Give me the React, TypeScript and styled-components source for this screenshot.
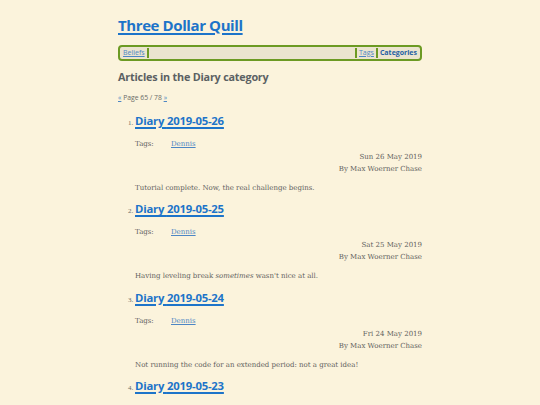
import React from 'react';
import styled, { createGlobalStyle } from 'styled-components';

const GlobalStyle = createGlobalStyle`
  html, body {
    margin: 0;
    padding: 0;
    background: #fbf3dc;
  }
  body {
    font-family: "Noto Sans", sans-serif;
  }
`;

const Page = styled.div`
  width: 304px;
  margin: 0 auto;
  padding-top: 13px;
`;

const Title = styled.a`
  display: block;
  font-family: "Open Sans", "Noto Sans", sans-serif;
  font-weight: 700;
  font-size: 15px;
  line-height: 24px;
  letter-spacing: -0.4px;
  color: #1d74c9;
  text-decoration: underline;
  text-decoration-thickness: 1.5px;
  text-underline-offset: 2px;
`;

const Nav = styled.nav`
  margin-top: 8px;
  height: 12px;
  display: flex;
  align-items: center;
  border: 2px solid #6c9a23;
  border-radius: 4px;
  background: #ebe4cf;
  padding: 0 1px;
  font-family: "Open Sans", "Noto Sans", sans-serif;
  font-size: 7px;
`;

const NavLink = styled.a<{ $current?: boolean }>`
  padding: 0 2px;
  color: ${(p) => (p.$current ? '#1f5fa2' : '#4d86c4')};
  font-weight: ${(p) => (p.$current ? 700 : 400)};
  text-decoration: ${(p) => (p.$current ? 'none' : 'underline')};
  line-height: 10px;
`;

const Sep = styled.span`
  width: 2px;
  height: 10px;
  background: #6c9a23;
`;

const Spacer = styled.span`
  flex: 1;
`;

const Heading = styled.h2`
  margin: 7px 0 0;
  font-family: "Open Sans", "Noto Sans", sans-serif;
  font-weight: 700;
  font-size: 10.8px;
  line-height: 18px;
  letter-spacing: -0.2px;
  color: #5b6163;
`;

const Pager = styled.p`
  margin: 7px 0 0;
  font-family: "Open Sans", "Noto Sans", sans-serif;
  font-size: 6.8px;
  line-height: 10px;
  color: #6a6c68;
  a {
    color: #4d86c4;
    text-decoration: underline;
  }
`;

const List = styled.ol`
  margin: 9px 0 0;
  padding: 0 0 0 17px;
`;

const Item = styled.li`
  margin-bottom: 6.3px;
  font-family: "Liberation Serif", serif;
  font-size: 6.5px;
  color: #6a6c68;
  &::marker {
    font-family: "Liberation Serif", serif;
    font-size: 7px;
  }
`;

const ItemTitle = styled.a`
  font-family: "Open Sans", "Noto Sans", sans-serif;
  font-weight: 700;
  font-size: 11.3px;
  line-height: 18px;
  letter-spacing: -0.2px;
  color: #1d74c9;
  text-decoration: underline;
  text-decoration-thickness: 1.5px;
  text-underline-offset: 2px;
`;

const Meta = styled.div`
  margin-top: 8px;
  font-family: "DejaVu Serif", serif;
  font-size: 7px;
  line-height: 12px;
  color: #5f615d;
`;

const TagRow = styled.div`
  display: flex;
  margin-bottom: 1px;
`;

const TagLabel = styled.span`
  width: 36px;
`;

const TagLink = styled.a`
  color: #4d86c4;
  text-decoration: underline;
`;

const Byline = styled.div`
  text-align: right;
`;

const Summary = styled.p`
  margin: 7px 0 0;
  font-family: "DejaVu Serif", serif;
  font-size: 7px;
  line-height: 12px;
  color: #5f615d;
`;

const articles = [
  { date: '2019-05-26', day: 'Sun 26 May 2019', summary: <>Tutorial complete. Now, the real challenge begins.</> },
  { date: '2019-05-25', day: 'Sat 25 May 2019', summary: <>Having leveling break <em>sometimes</em> wasn't nice at all.</> },
  { date: '2019-05-24', day: 'Fri 24 May 2019', summary: <>Not running the code for an extended period: not a great idea!</> },
  { date: '2019-05-23', day: 'Thu 23 May 2019', summary: <>More work.</> },
];

export default function App() {
  return (
    <>
      <GlobalStyle />
      <Page>
        <Title href="#">Three Dollar Quill</Title>
        <Nav>
          <NavLink href="#">Beliefs</NavLink>
          <Sep />
          <Spacer />
          <Sep />
          <NavLink href="#">Tags</NavLink>
          <Sep />
          <NavLink href="#" $current>Categories</NavLink>
        </Nav>
        <Heading>Articles in the Diary category</Heading>
        <Pager>
          <a href="#">«</a> Page 65 / 78 <a href="#">»</a>
        </Pager>
        <List>
          {articles.map((a) => (
            <Item key={a.date}>
              <ItemTitle href="#">Diary {a.date}</ItemTitle>
              <Meta>
                <TagRow>
                  <TagLabel>Tags:</TagLabel>
                  <TagLink href="#">Dennis</TagLink>
                </TagRow>
                <Byline>{a.day}</Byline>
                <Byline>By Max Woerner Chase</Byline>
              </Meta>
              <Summary>{a.summary}</Summary>
            </Item>
          ))}
        </List>
      </Page>
    </>
  );
}
